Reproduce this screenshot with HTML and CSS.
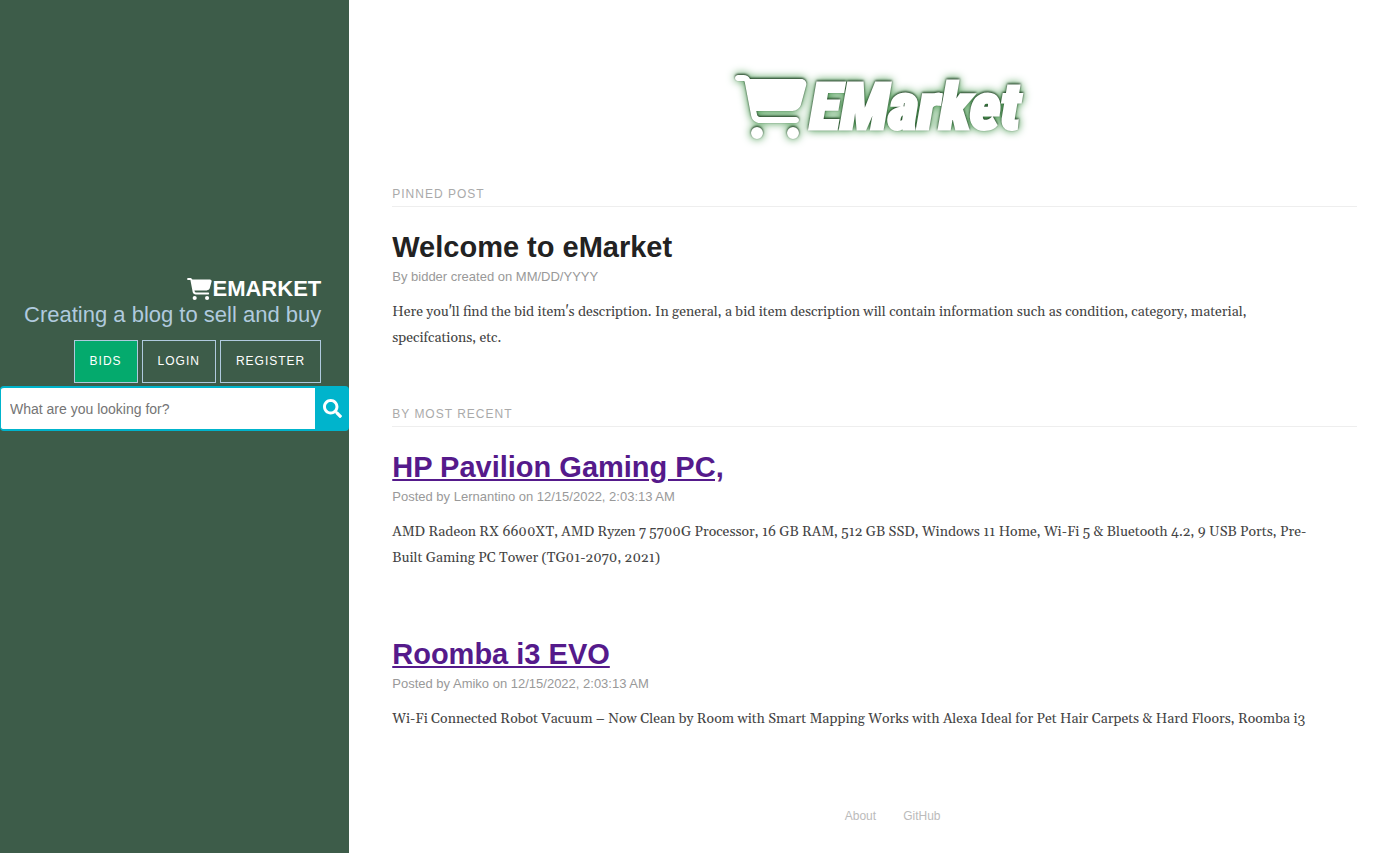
FILE: index.html
```
<!DOCTYPE html>
<html lang="en">
<head>
<meta charset="utf-8">
<title>eMarket</title>
<link rel="stylesheet" href="styles.css">
</head>
<body>
<div class="layout">
  <header class="sidebar">
    <div class="brand">
      <h1 class="brand-title">
        <svg class="brand-icon" viewBox="0 0 576 512" aria-hidden="true"><path d="M0 24C0 10.700 10.700 0 24 0H69.500c22 0 41.500 12.800 50.600 32h411c26.300 0 45.500 25 38.600 50.400l-41 152.300c-8.500 31.400-37 53.300-69.500 53.300H170.700l5.400 28.500c2.200 11.300 12.100 19.500 23.600 19.500H488c13.300 0 24 10.700 24 24s-10.700 24-24 24H199.700c-34.600 0-64.300-24.600-70.700-58.500L77.400 54.500c-.7-3.800-4-6.500-7.900-6.500H24C10.700 48 0 37.300 0 24zM128 464a48 48 0 1 1 96 0 48 48 0 1 1-96 0zm336-48a48 48 0 1 1 0 96 48 48 0 1 1 0-96z"/></svg><span>EMARKET</span>
      </h1>
      <h2 class="brand-tagline">Creating a blog to sell and buy</h2>
      <nav class="nav">
        <a class="nav-link nav-link-active" href="#bids">BIDS</a>
        <a class="nav-link" href="#login">LOGIN</a>
        <a class="nav-link" href="#register">REGISTER</a>
      </nav>
    </div>
    <form class="search">
      <input class="search-input" type="text" aria-label="Search" placeholder="What are you looking for?">
      <button class="search-button" type="button" aria-label="Submit search">
        <svg class="search-icon" viewBox="0 0 512 512" aria-hidden="true"><path d="M505 442.700L405.300 343c-4.500-4.500-10.600-7-17-7H372c27.600-35.300 44-79.700 44-128C416 93.100 322.900 0 208 0S0 93.100 0 208s93.100 208 208 208c48.300 0 92.700-16.400 128-44v16.300c0 6.400 2.500 12.500 7 17l99.700 99.700c9.400 9.400 24.600 9.400 33.900 0l28.300-28.300c9.400-9.400 9.400-24.600.1-34zM208 336c-70.700 0-128-57.200-128-128 0-70.700 57.200-128 128-128 70.700 0 128 57.200 128 128 0 70.700-57.200 128-128 128z"/></svg>
      </button>
    </form>
  </header>
  <main class="content">
    <svg class="logo" viewBox="0 0 320 100" role="img" aria-label="EMarket">
      <g class="logo-art">
        <svg x="20" y="20" width="72" height="64" viewBox="0 0 576 512" overflow="visible"><path d="M0 24C0 10.700 10.700 0 24 0H69.500c22 0 41.500 12.800 50.600 32h411c26.300 0 45.500 25 38.600 50.400l-41 152.300c-8.500 31.400-37 53.300-69.500 53.300H170.700l5.400 28.500c2.200 11.300 12.100 19.500 23.600 19.500H488c13.300 0 24 10.700 24 24s-10.700 24-24 24H199.700c-34.600 0-64.300-24.600-70.700-58.500L77.400 54.500c-.7-3.800-4-6.500-7.900-6.500H24C10.700 48 0 37.300 0 24zM128 464a48 48 0 1 1 96 0 48 48 0 1 1-96 0zm336-48a48 48 0 1 1 0 96 48 48 0 1 1 0-96z"/></svg>
        <text class="logo-text" x="95" y="74">EMarket</text>
      </g>
    </svg>
    <section class="posts">
      <h2 class="section-title">PINNED POST</h2>
      <article class="post">
        <h3 class="post-title">Welcome to eMarket</h3>
        <p class="post-meta">By bidder created on MM/DD/YYYY</p>
        <p class="post-text">Here you'll find the bid item's description. In general, a bid item description will contain information such as condition, category, material, specifcations, etc.</p>
      </article>
    </section>
    <section class="posts">
      <h2 class="section-title">BY MOST RECENT</h2>
      <article class="post">
        <h3 class="post-title"><a class="post-link" href="#hp">HP Pavilion Gaming PC,</a></h3>
        <p class="post-meta">Posted by Lernantino on 12/15/2022, 2:03:13 AM</p>
        <p class="post-text">AMD Radeon RX 6600XT, AMD Ryzen 7 5700G Processor, 16 GB RAM, 512 GB SSD, Windows 11 Home, Wi-Fi 5 &amp; Bluetooth 4.2, 9 USB Ports, Pre-Built Gaming PC Tower (TG01-2070, 2021)</p>
      </article>
      <article class="post">
        <h3 class="post-title"><a class="post-link" href="#roomba">Roomba i3 EVO</a></h3>
        <p class="post-meta">Posted by Amiko on 12/15/2022, 2:03:13 AM</p>
        <p class="post-text">Wi-Fi Connected Robot Vacuum – Now Clean by Room with Smart Mapping Works with Alexa Ideal for Pet Hair Carpets &amp; Hard Floors, Roomba i3</p>
      </article>
    </section>
    <footer class="footer">
      <a class="footer-link" href="#about">About</a>
      <a class="footer-link" href="#github">GitHub</a>
    </footer>
  </main>
</div>
</body>
</html>
```
FILE: styles.css
```
* {
  box-sizing: border-box;
}

body {
  margin: 0;
  background: #fff;
  color: #222;
  font-family: "Liberation Sans", Arial, sans-serif;
}

h1, h2, h3, p {
  margin: 0;
}

.layout {
  display: grid;
  grid-template-columns: 1fr 3fr;
  min-height: 100vh;
}

.sidebar {
  padding-top: 276px;
  background: #3d5c49;
  color: #fff;
}

.brand {
  padding-right: 28px;
  text-align: right;
}

.brand-title {
  display: flex;
  justify-content: flex-end;
  align-items: center;
  font-size: 22px;
  line-height: 26px;
}

.brand-icon {
  width: 25px;
  height: 22px;
  fill: currentColor;
}

.brand-tagline {
  color: #b0cade;
  font-size: 22px;
  font-weight: 400;
  line-height: 26px;
}

.nav {
  display: flex;
  justify-content: flex-end;
  gap: 4px;
  margin-top: 12px;
}

.nav-link {
  padding: 12px 15px;
  border: 1px solid #b0cade;
  color: #fff;
  font-size: 12px;
  letter-spacing: 1px;
  line-height: 17px;
  text-decoration: none;
}

.nav-link-active {
  background: #04aa6d;
}

.search {
  display: flex;
  height: 45px;
  margin-top: 3px;
}

.search-input {
  flex: 1;
  min-width: 0;
  padding: 0 9px;
  border: 2px solid #00b4cc;
  border-left-width: 1px;
  border-right: 0;
  border-radius: 4px 0 0 4px;
  background: #fff;
  font: 14px "Liberation Sans", Arial, sans-serif;
}

.search-input::placeholder {
  color: #757575;
}

.search-button {
  display: flex;
  align-items: center;
  justify-content: center;
  width: 34px;
  padding: 0;
  border: 0;
  border-radius: 0 4px 4px 0;
  background: #00b4cc;
  color: #fff;
}

.search-icon {
  width: 19px;
  height: 19px;
  fill: currentColor;
}

.content {
  padding: 55px 40px 0 43px;
}

.logo {
  display: block;
  width: 320px;
  height: 100px;
  margin: 0 auto 30px;
  overflow: visible;
}

.logo-art {
  fill: #fff;
  filter: drop-shadow(0 -1px 1px #1c3a20) drop-shadow(0 0 4px #3f9447);
}

.logo-text {
  font: italic 900 65px Impact, "Roboto Condensed", "Open Sans Condensed", Roboto, sans-serif;
  stroke: #fff;
  stroke-width: 3px;
}

.posts {
  margin-bottom: 54px;
}

.section-title {
  padding: 1px 0 3px;
  border-bottom: 1px solid #eee;
  color: #aaa;
  font-size: 12px;
  font-weight: 400;
  letter-spacing: 1px;
  line-height: 17px;
}

.post {
  padding-top: 22px;
}

.post + .post {
  margin-top: 43px;
}

.post-title {
  color: #222;
  font-size: 29px;
  line-height: 36px;
}

.post-link {
  color: #551a8b;
}

.post-meta {
  margin-top: 3px;
  color: #999;
  font-size: 13px;
  line-height: 17px;
}

.post-text {
  margin-top: 14px;
  padding-right: 28px;
  color: #444;
  font-family: Georgia, Gelasio, "DejaVu Serif", serif;
  font-size: 14px;
  line-height: 26px;
}

.footer {
  display: flex;
  justify-content: center;
  gap: 27px;
  margin-top: 76px;
  padding-left: 36px;
}

.footer-link {
  color: #bbb;
  font-size: 12px;
  line-height: 16px;
  text-decoration: none;
}
```
